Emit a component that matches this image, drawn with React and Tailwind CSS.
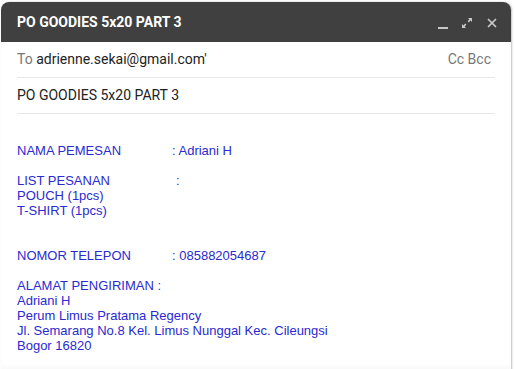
import { X } from 'lucide-react'

const Row = ({ label, value, w = 'w-[155px]' }) => (
	<div className="flex">
		<span className={`${w} shrink-0`}>{label}</span>
		<span>{value}</span>
	</div>
)

const App = () => {
	return (
		<div className="w-[515px] h-[369px] bg-white overflow-hidden pt-[2px] pl-[1px]">
			<div className="w-[510px] h-[380px] bg-white rounded-t-lg shadow-[1px_0_2px_rgba(0,0,0,0.25)] overflow-hidden flex flex-col">
				<div className="h-[40px] bg-[#404040] flex items-center justify-between pl-4 pr-3 shrink-0">
					<span className="text-white font-bold text-[14px] font-['Roboto',sans-serif]">PO GOODIES 5x20 PART 3</span>
					<div className="flex items-center gap-3 text-[#c8c8c8] pt-[2px]">
						<svg width="12" height="12" viewBox="0 0 12 12"><rect x="1" y="10" width="10" height="2" fill="currentColor" /></svg>
						<svg width="12" height="12" viewBox="0 0 12 12" fill="currentColor">
							<path d="M7 1h4v4L9.6 3.6 7.8 5.4 6.6 4.2 8.4 2.4z" />
							<path d="M5 11H1V7l1.4 1.4 1.8-1.8 1.2 1.2-1.8 1.8z" />
						</svg>
						<X size={14} strokeWidth={3} />
					</div>
				</div>
				<div className="px-4 font-['Roboto',sans-serif] text-[14px]">
					<div className="h-[36px] flex items-center justify-between border-b border-[#e8e8e8]">
						<div>
							<span className="text-[#777]">To </span>
							<span className="text-[#222]">adrienne.sekai@gmail.com'</span>
						</div>
						<span className="text-[#777] pr-1">Cc Bcc</span>
					</div>
					<div className="h-[36px] flex items-center border-b border-[#e8e8e8] text-[#222]">
						PO GOODIES 5x20 PART 3
					</div>
				</div>
				<div className="px-4 pt-[29px] font-['Liberation_Sans',Arial,sans-serif] text-[13px] leading-[15px] text-[#2a2ad0]">
					<Row label="NAMA PEMESAN" value=": Adriani H" />
					<div className="h-[15px]" />
					<Row label="LIST PESANAN" value=":" w="w-[159px]" />
					<div>POUCH (1pcs)</div>
					<div>T-SHIRT (1pcs)</div>
					<div className="h-[15px]" />
					<div className="h-[15px]" />
					<Row label="NOMOR TELEPON" value=": 085882054687" />
					<div className="h-[15px]" />
					<div>ALAMAT PENGIRIMAN :</div>
					<div>Adriani H</div>
					<div>Perum Limus Pratama Regency</div>
					<div>Jl. Semarang No.8 Kel. Limus Nunggal Kec. Cileungsi</div>
					<div>Bogor 16820</div>
				</div>
				<div className="mt-[11px] h-[10px] bg-gradient-to-b from-white to-[#f2f2f2]" />
			</div>
		</div>
	)
}

export default App
